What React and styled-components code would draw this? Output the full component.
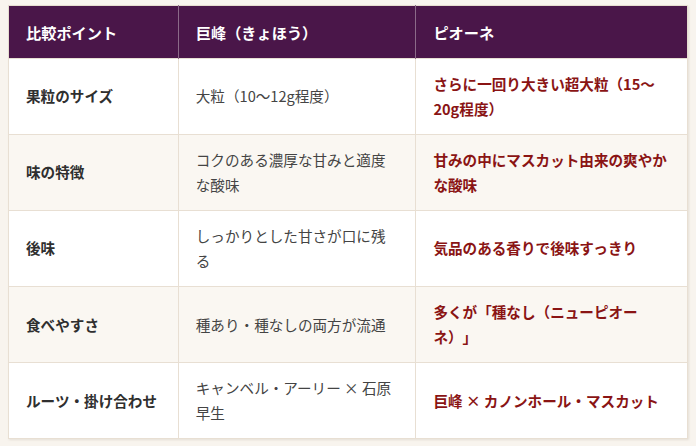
import React from "react";
import styled, { createGlobalStyle } from "styled-components";

const GlobalStyle = createGlobalStyle`
  html, body {
    margin: 0;
    padding: 0;
    background: #f8f4ee;
  }
  body {
    font-family: "Noto Sans CJK JP", "Noto Sans", sans-serif;
    text-spacing-trim: space-all;
  }
`;

const Page = styled.div`
  padding: 5px 8px;
`;

const Table = styled.table`
  width: 100%;
  border-collapse: collapse;
  table-layout: fixed;
  border: 1px solid #e6ddd0;
  box-shadow: 1px 1px 2px rgba(120, 100, 80, 0.15);
  font-size: 14.6px;
  line-height: 1.75;
`;

const HeadCell = styled.th`
  background: #4a1649;
  color: #ffffff;
  font-weight: 700;
  font-size: 15.2px;
  text-align: left;
  padding: 13px 17px 12px;
  border-left: 1px solid #8b6a88;
  &:first-child {
    border-left: none;
  }
`;

const Row = styled.tr`
  background: ${(p) => (p.$alt ? "#faf7f2" : "#ffffff")};
`;

const Cell = styled.td`
  height: 51px;
  padding: 12px 17px;
  border: 1px solid #e8dfd3;
  vertical-align: middle;
  color: ${(p) =>
    p.$kind === "label" ? "#2f2f2f" : p.$kind === "pione" ? "#8a1414" : "#444444"};
  font-weight: ${(p) => (p.$kind === "normal" ? 400 : 700)};
`;

const rows = [
  ["果粒のサイズ", "大粒（10〜12g程度）", "さらに一回り大きい超大粒（15〜20g程度）"],
  ["味の特徴", "コクのある濃厚な甘みと適度な酸味", "甘みの中にマスカット由来の爽やかな酸味"],
  ["後味", "しっかりとした甘さが口に残る", "気品のある香りで後味すっきり"],
  ["食べやすさ", "種あり・種なしの両方が流通", "多くが「種なし（ニューピオーネ）」"],
  ["ルーツ・掛け合わせ", "キャンベル・アーリー × 石原早生", "巨峰 × カノンホール・マスカット"],
];

export default function App() {
  return (
    <Page>
      <GlobalStyle />
      <Table>
        <colgroup>
          <col style={{ width: "25%" }} />
          <col style={{ width: "35%" }} />
          <col style={{ width: "40%" }} />
        </colgroup>
        <thead>
          <tr>
            <HeadCell>比較ポイント</HeadCell>
            <HeadCell>巨峰（きょほう）</HeadCell>
            <HeadCell>ピオーネ</HeadCell>
          </tr>
        </thead>
        <tbody>
          {rows.map((r, i) => (
            <Row key={r[0]} $alt={i % 2 === 1}>
              <Cell $kind="label">{r[0]}</Cell>
              <Cell $kind="normal">{r[1]}</Cell>
              <Cell $kind="pione">{r[2]}</Cell>
            </Row>
          ))}
        </tbody>
      </Table>
    </Page>
  );
}
